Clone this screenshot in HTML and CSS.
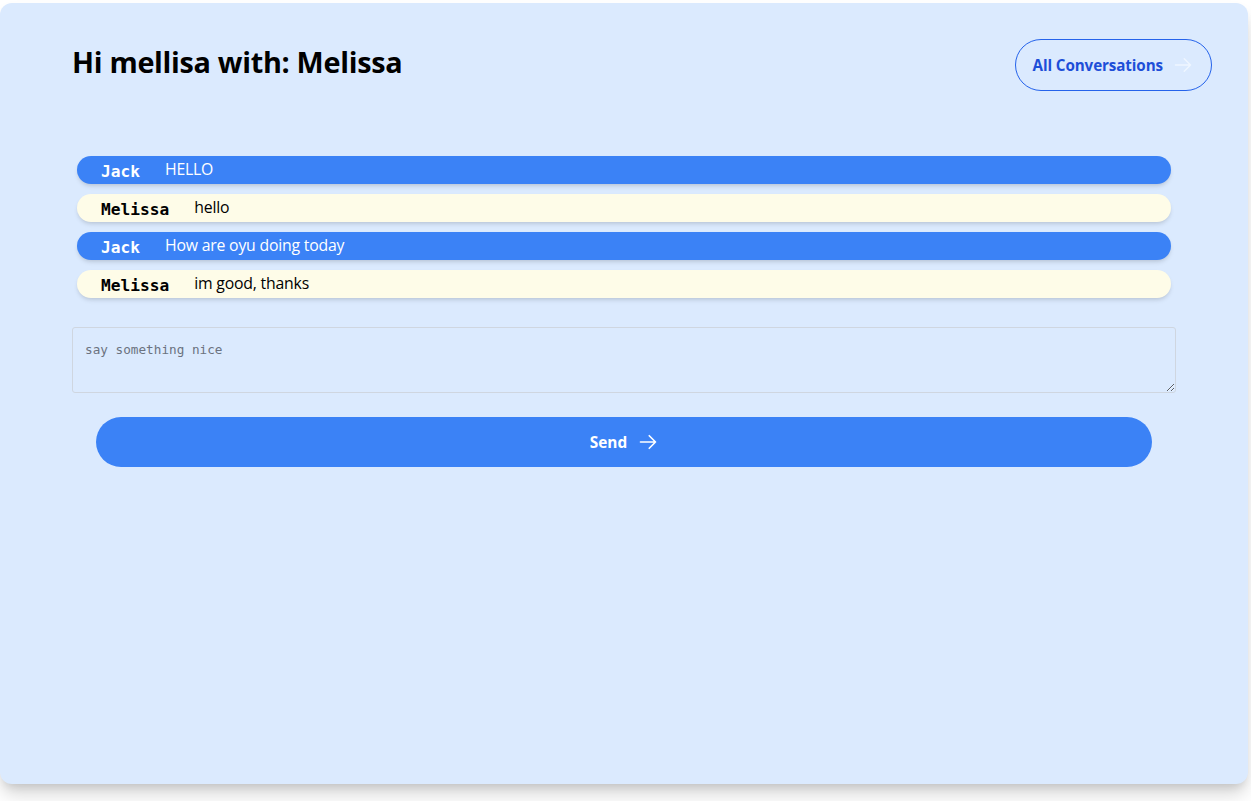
FILE: index.html
```html
<!DOCTYPE html>
<html>
<head>
<meta charset="utf-8">
<link rel="stylesheet" href="styles.css">
</head>
<body>
<div class="card">
  <header class="header">
    <h1 class="title">Hi mellisa with: Melissa</h1>
    <a class="all-btn" href="#">All Conversations
      <svg class="arrow" viewBox="0 0 24 24" fill="none" stroke="currentColor" stroke-width="1.8" stroke-linecap="round" stroke-linejoin="round"><path d="M13.5 4.5 21 12m0 0-7.5 7.5M21 12H3"/></svg>
    </a>
  </header>
  <main class="main">
    <ul class="messages">
      <li class="msg msg-jack"><span class="name">Jack</span><span class="text">HELLO</span></li>
      <li class="msg msg-mel"><span class="name">Melissa</span><span class="text">hello</span></li>
      <li class="msg msg-jack"><span class="name">Jack</span><span class="text">How are oyu doing today</span></li>
      <li class="msg msg-mel"><span class="name">Melissa</span><span class="text">im good, thanks</span></li>
    </ul>
    <textarea class="input" placeholder="say something nice"></textarea>
    <button class="send">Send
      <svg class="arrow" viewBox="0 0 24 24" fill="none" stroke="currentColor" stroke-width="2" stroke-linecap="round" stroke-linejoin="round"><path d="M13.5 4.5 21 12m0 0-7.5 7.5M21 12H3"/></svg>
    </button>
  </main>
</div>
</body>
</html>
```
FILE: styles.css
```css
* { box-sizing: border-box; }
html, body { margin: 0; padding: 0; background: #ffffff; }
body {
  padding-top: 3px;
  padding-bottom: 17px;
  font-family: "Open Sans", "Noto Sans", sans-serif;
  color: #000;
}
.card {
  width: 1248px;
  height: 781px;
  background: #dbeafe;
  border-radius: 12px;
  box-shadow: 0 12px 18px -2px rgba(0,0,0,0.16), 0 6px 10px -4px rgba(0,0,0,0.12);
}
.header {
  display: flex;
  justify-content: space-between;
  align-items: center;
  padding: 36px 36px 0 72px;
}
.title {
  margin: 0;
  font-size: 28.8px;
  font-weight: 700;
  line-height: 52px;
  letter-spacing: -0.3px;
  transform: translateY(-3px);
}
.all-btn {
  display: flex;
  align-items: center;
  gap: 10px;
  height: 52px;
  padding: 0 18px 0 17px;
  border: 1px solid #2563eb;
  border-radius: 9999px;
  color: #1d4ed8;
  font-weight: 700;
  font-size: 15.2px;
  text-decoration: none;
  letter-spacing: -0.1px;
}
.all-btn .arrow { width: 20px; height: 20px; color: #eff6ff; }
.main {
  width: 1104px;
  margin-left: 72px;
  margin-top: 65px;
  display: flex;
  flex-direction: column;
}
.messages {
  list-style: none;
  margin: 0 5px;
  padding: 0;
  display: flex;
  flex-direction: column;
  gap: 10px;
}
.msg {
  display: flex;
  align-items: center;
  height: 28px;
  padding-left: 24px;
  border-radius: 9999px;
  box-shadow: 0 3px 5px -1px rgba(0,0,0,0.12), 0 2px 4px -2px rgba(0,0,0,0.08);
  font-size: 15.8px;
}
.msg-jack { background: #3b82f6; color: #fff; }
.msg-mel { background: #fefce8; color: #000; }
.name {
  font-family: "DejaVu Sans Mono", "Liberation Mono", monospace;
  font-weight: 700;
  font-size: 16.2px;
  margin-right: 25px;
  padding-top: 3px;
}
.text { letter-spacing: -0.2px; padding-bottom: 2px; }
.input {
  margin-top: 29px;
  height: 66px;
  width: 100%;
  resize: vertical;
  background: transparent;
  border: 1px solid #cfd6e0;
  border-radius: 3px;
  padding: 14px 12px;
  font-family: "DejaVu Sans Mono", "Liberation Mono", monospace;
  font-size: 12.7px;
  color: #111;
}
.input::placeholder { color: #6b7280; }
.send {
  margin: 24px 24px 0;
  height: 50px;
  border: none;
  border-radius: 9999px;
  background: #3b82f6;
  color: #fff;
  font-family: "Open Sans", "Noto Sans", sans-serif;
  font-weight: 700;
  font-size: 15.4px;
  display: flex;
  align-items: center;
  justify-content: center;
  gap: 11px;
  cursor: pointer;
}
.send .arrow { width: 20px; height: 20px; }
```
